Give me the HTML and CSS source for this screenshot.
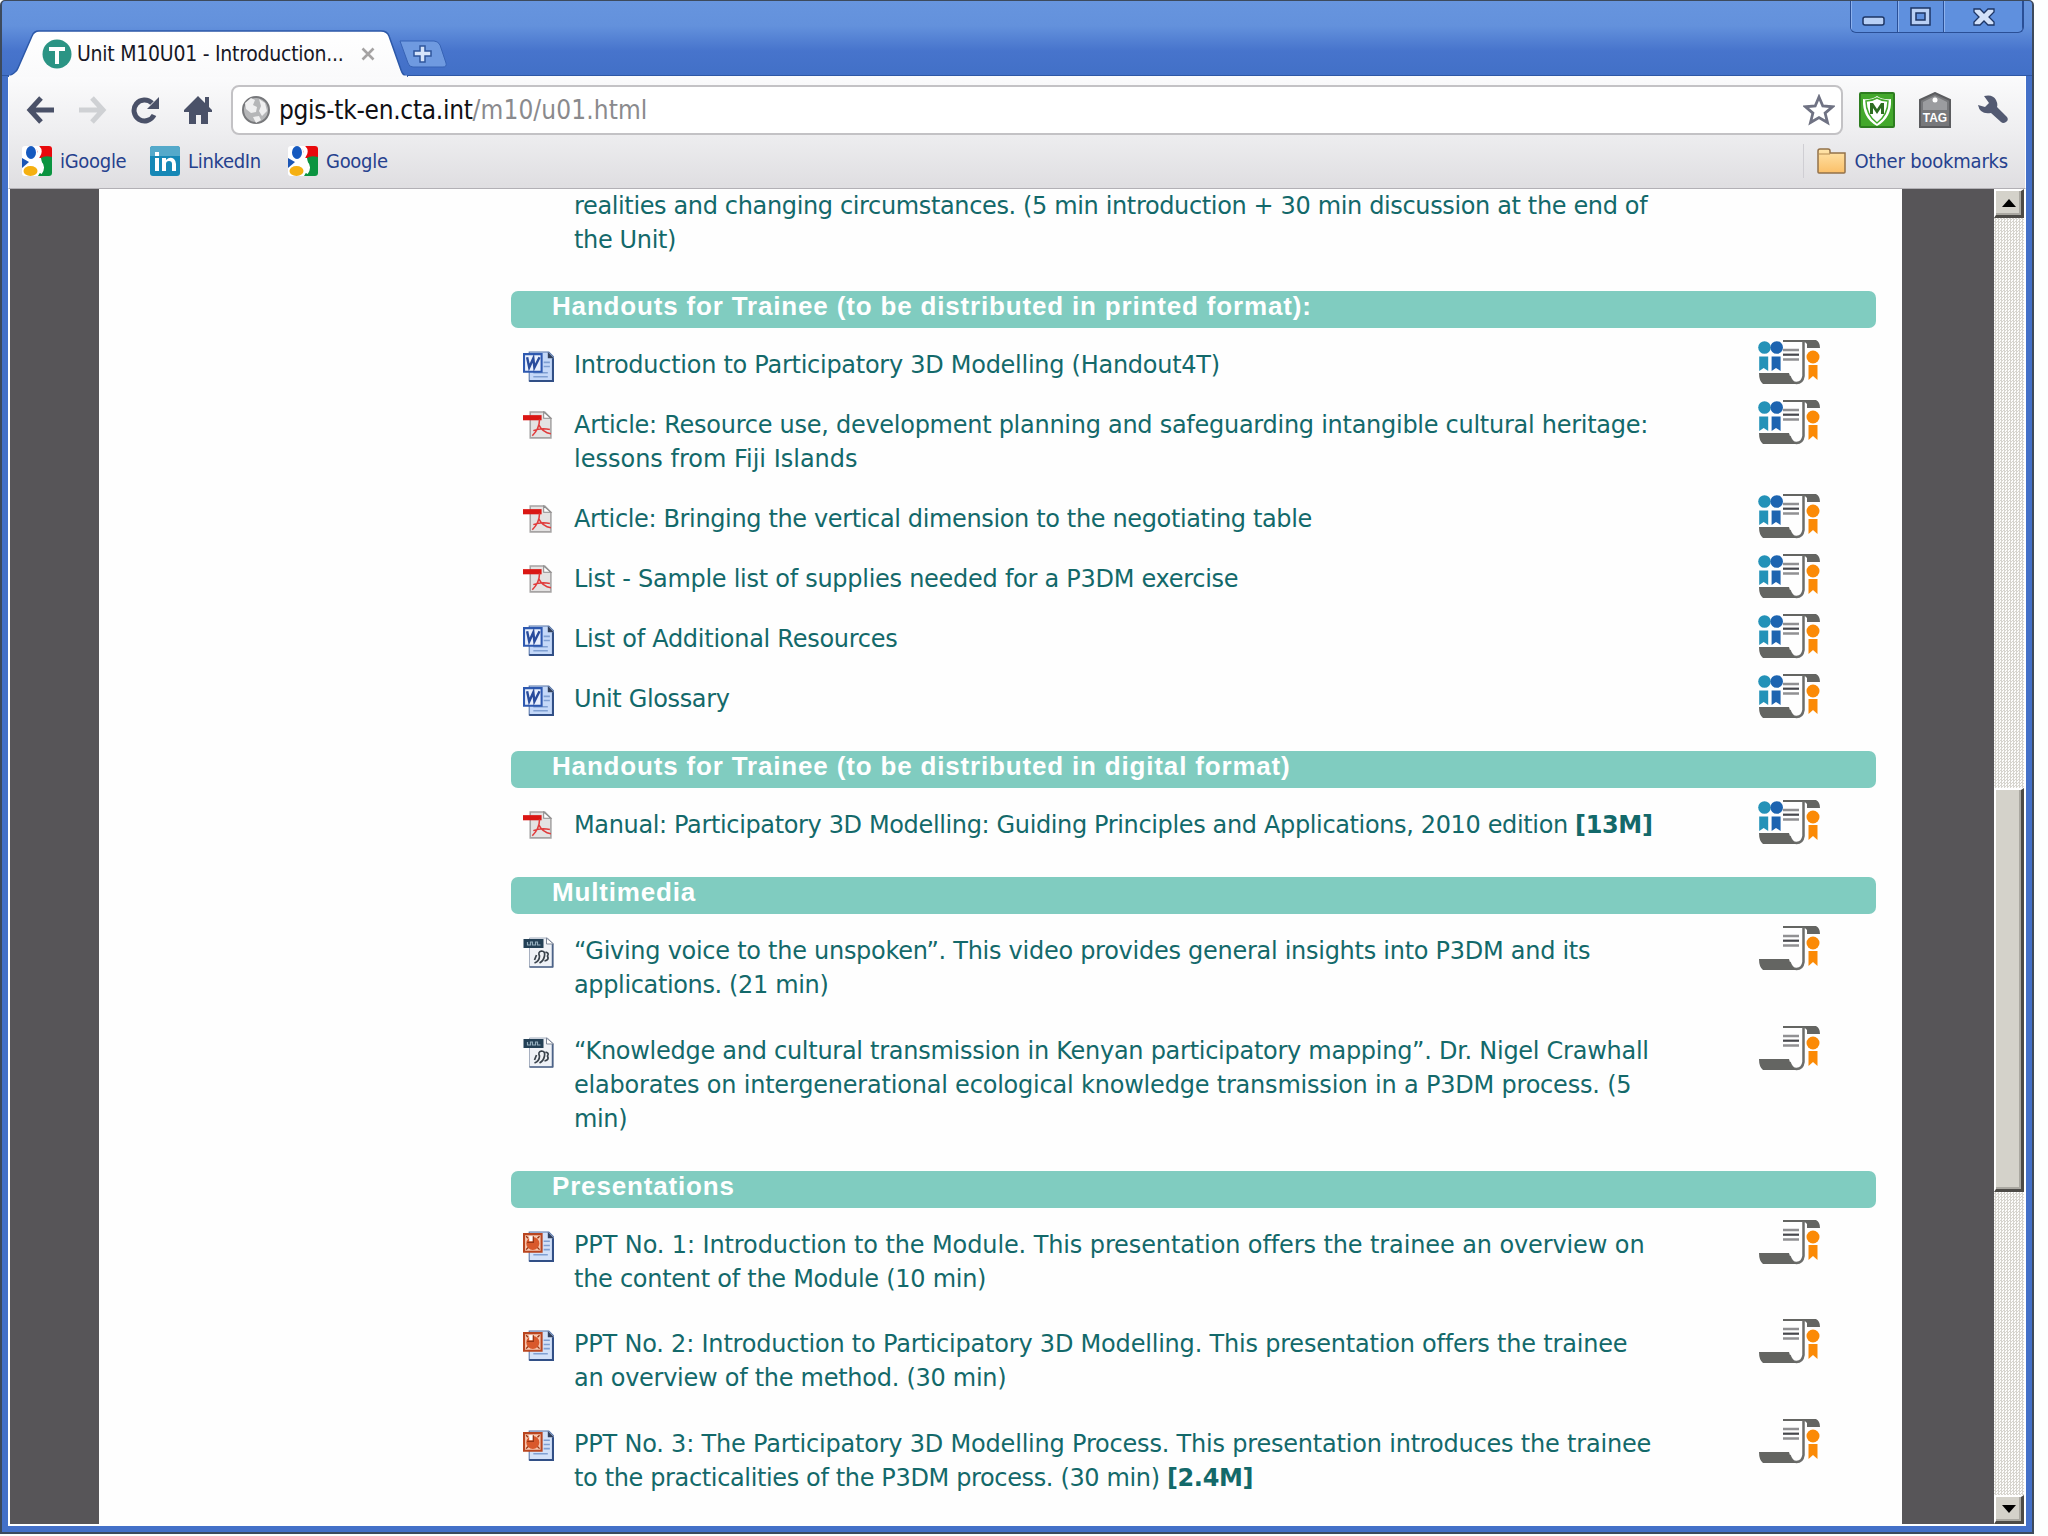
FILE: index.html
```html
<!DOCTYPE html>
<html lang="en">
<head>
    <meta charset="utf-8">
    <title>Unit M10U01 - Introduction to Participatory 3D Modelling</title>
    <link rel="stylesheet" href="styles.css">
</head>
<body>
    <!-- shared icons -->
    <svg class="sprite" width="0" height="0">
        <symbol id="scroll" viewBox="0 0 64 47">
            <path d="M25 1h33q4 2 4 8H49V5q-1-2-4-2H25z" fill="#646562"/>
            <path d="M45.500 2v35q-1 7-7 7-5 0-7-7" fill="none" stroke="#6c6d6b" stroke-width="2.500"/>
            <path d="M1 34h30q2 9 8 11H5q-4-3-4-11z" fill="#646562"/>
            <path d="M25 11h16M25 20.500h16" stroke="#909092" stroke-width="2.600"/>
            <path d="M25 15.700h16" stroke="#47484d" stroke-width="2.200"/>
            <circle cx="55" cy="18" r="6.500" fill="#fb8a06"/>
            <path d="M50.500 26h9v15l-4.500-4-4.500 4z" fill="#fb8a06"/>
        </symbol>
        <symbol id="people" viewBox="0 0 64 47">
            <circle cx="6.500" cy="8.500" r="6.300" fill="#2492b8"/>
            <path d="M1.200 17.500h9V32l-4.500-3-4.500 3z" fill="#2492b8"/>
            <circle cx="18.700" cy="8.500" r="6.300" fill="#1d64b0"/>
            <path d="M13.600 17.500h9V32L18 29l-4.400 3z" fill="#1d64b0"/>
        </symbol>
        <symbol id="word" viewBox="0 0 30 30">
            <path d="M6 1h19l5 5v23H6z" fill="#c4d8f8" stroke="#5674a8"/>
            <path d="M24 1v6h6z" fill="#33425e"/>
            <path d="M29 7v22H6" fill="none" stroke="#314f86" stroke-width="2"/>
            <path d="M10 21h14M10 25h14M20 11h6M20 15h6" stroke="#7f9fd2" stroke-width="1.500"/>
            <path d="M1 3h17v17H1z" fill="#eaf1fd" stroke="#2e59b0" stroke-width="2"/>
            <path d="M4 6l2 10 4-9 1 9 5-10" fill="none" stroke="#294c9c" stroke-width="2.300"/>
        </symbol>
        <symbol id="pdf" viewBox="0 0 30 30">
            <path d="M7 1h14l6 6v19H7z" fill="#e4e2e2" stroke="#a5a3a3" stroke-width="1.500"/>
            <path d="M20 1v6h7z" fill="#fff" stroke="#8d8b8b"/>
            <path d="M0 4h18v5H0z" fill="#da1714"/>
            <path d="M16 8q0 9-7 16M15 13q4 8 12 9M10 19q8-3 16-1" fill="none" stroke="#e03b3b" stroke-width="1.500"/>
        </symbol>
        <symbol id="video" viewBox="0 0 30 31">
            <path d="M6 1h18l6 6v23H6z" fill="#eff2f7" stroke="#a7b0c0"/>
            <path d="M29 7v23H6" fill="none" stroke="#4c6388" stroke-width="1.500"/>
            <path d="M23 1v6h7z" fill="#fff" stroke="#7b8596"/>
            <path d="M0 2h20v9H0z" fill="#223f55"/>
            <path d="M4 5v3h3V5h2v3h3V5h2v3h3" fill="none" stroke="#93adbd" stroke-width="1.200"/>
            <path d="M11 26q5-2 5-7-2-4 2-5 4 0 3 5t-5 7M22 15q4 1 2 4 2 4-3 5M13 18l-2 5" fill="none" stroke="#3a434c" stroke-width="1.700"/>
        </symbol>
        <symbol id="ppt" viewBox="0 0 30 30">
            <path d="M6 1h19l5 5v23H6z" fill="#d3e1f8" stroke="#5674a8"/>
            <path d="M24 1v6h6z" fill="#33425e"/>
            <path d="M29 7v22H6" fill="none" stroke="#314f86" stroke-width="2"/>
            <path d="M10 23h14M20 10h6M20 14h6M20 18h6" stroke="#7f9fd2" stroke-width="1.500"/>
            <path d="M1 3h17v17H1z" fill="#f7c9b2" stroke="#b9451f" stroke-width="2"/>
            <circle cx="9.500" cy="12" r="6.300" fill="#d9592b"/>
            <path d="M6 5h4v5H6z" fill="#fff"/>
            <path d="M10 5v6H4M3 5l2 2M16 5l-2 2M3 18l2-2M16 18l-2-2" fill="none" stroke="#9a3513" stroke-width="1.300"/>
        </symbol>
        <symbol id="google" viewBox="0 0 30 30">
            <rect width="30" height="30" rx="3" fill="#fff"/>
            <path d="M14 0h13q3 0 3 3v9H17z" fill="#e8090c"/>
            <path d="M19 12q4-3 11-1v16q0 3-3 3H16q6-8 3-18z" fill="#0b9440"/>
            <path d="M0 12l7 4-7 6z" fill="#1b55b5"/>
            <ellipse cx="9" cy="6.500" rx="5" ry="6.500" fill="#1559bf"/>
            <ellipse cx="8.500" cy="25" rx="7" ry="5" fill="#f5b011"/>
            <path d="M14 0q6 4 2 10-3 4 2 7 4 4 0 10" fill="none" stroke="#fff" stroke-width="4"/>
        </symbol>
        <linearGradient id="tabFill" x1="0" y1="0" x2="0" y2="1">
            <stop offset="0" stop-color="#fff"/>
            <stop offset="1" stop-color="#fafafb"/>
        </linearGradient>
        <linearGradient id="folderFill" x1="0" y1="0" x2="0" y2="1">
            <stop offset="0" stop-color="#ffe5ab"/>
            <stop offset="1" stop-color="#fbbf68"/>
        </linearGradient>
    </svg>

    <div class="window">
        <div class="titlebar">
            <div class="tab">
                <svg class="tab-shape" width="400" height="47" viewBox="0 0 400 47">
                    <path d="M0 47L6 43Q9 41 10 38L24 6Q26 1 31 1H373Q379 1 381 6L393 40Q395 46 400 47z" fill="url(#tabFill)" stroke="#2c58a8" stroke-width="1.500"/>
                    <path d="M1 47h398" stroke="#fafafb" stroke-width="3"/>
                </svg>
                <svg class="favicon" width="30" height="30" viewBox="0 0 30 30">
                    <circle cx="15" cy="15" r="14.500" fill="#2b9484"/>
                    <path d="M7 8h16v4h-6v13h-4V12H7z" fill="#fff"/>
                </svg>
                <span class="tab-title">Unit M10U01 - Introduction...</span>
                <svg class="tab-close" width="14" height="14" viewBox="0 0 14 14"><path d="M1.500 1.500l11 11M12.500 1.500l-11 11" stroke="#a5a3a3" stroke-width="2.600"/></svg>
            </div>
            <svg class="new-tab" width="48" height="28" viewBox="0 0 48 28">
                <path d="M1 1h34q4 0 6 4l6 18q1 4-3 4H14q-4 0-5-4z" fill="#6f9ae0" stroke="#3763b5"/>
                <path d="M21 6h5v5h6v5h-6v6h-5v-6h-6v-5h6z" fill="#d6e4fa" stroke="#2f569c" stroke-width="1.500"/>
            </svg>
            <div class="controls">
                <div class="control minimize">
                    <svg width="24" height="10" viewBox="0 0 24 10"><rect x="1" y="1" width="21" height="8" rx="2" fill="#b9d0f5" stroke="#1d3564" stroke-width="1.500"/></svg>
                </div>
                <div class="control maximize">
                    <svg width="24" height="20" viewBox="0 0 24 20"><path d="M2 1h19v17H2zM7 6v7h9V6z" fill="#b9d0f5" fill-rule="evenodd" stroke="#1d3564" stroke-width="1.500"/></svg>
                </div>
                <div class="control close">
                    <svg width="24" height="20" viewBox="0 0 24 20"><path d="M2 2h6l4 4 4-4h6v3l-5 5 5 5v3h-6l-4-4-4 4H2v-3l5-5-5-5z" fill="#d2e1f9" stroke="#1d3564" stroke-width="1.300"/></svg>
                </div>
            </div>
        </div>

        <div class="chrome">
            <div class="toolbar">
                <svg class="nav-icon" width="28" height="28" viewBox="0 0 28 28"><path d="M15 2L4 14l11 12M4 14h24" fill="none" stroke="#4a5168" stroke-width="5"/></svg>
                <svg class="nav-icon" width="28" height="28" viewBox="0 0 28 28"><path d="M13 2l11 12-11 12M24 14H0" fill="none" stroke="#cfd1d4" stroke-width="5"/></svg>
                <svg class="nav-icon" width="28" height="28" viewBox="0 0 28 28"><path d="M23 19A10.500 10.500 0 1 1 21 7" fill="none" stroke="#4a5168" stroke-width="5"/><path d="M28 1v12H16z" fill="#4a5168"/></svg>
                <svg class="nav-icon" width="28" height="28" viewBox="0 0 28 28"><path d="M14 0l7 7V1h4v10l3 3v2h-4v12h-7v-9h-5v9H5V16H0v-2z" fill="#4a5168"/></svg>
                <div class="address">
                    <svg width="30" height="30" viewBox="0 0 30 30">
                        <circle cx="15" cy="15" r="13" fill="#b5b6b8" stroke="#77787b" stroke-width="2"/>
                        <path d="M4 8l6-5 4 2-2 5 4 2-1 5-5 1-5-4zM18 4l6 4 2 8-5 5-3-5 2-5zM12 22l6-1 2 4-5 3z" fill="#efeff0"/>
                    </svg>
                    <span class="url"><b>pgis-tk-en.cta.int</b>/m10/u01.html</span>
                    <svg class="star" width="32" height="32" viewBox="0 0 32 32"><path d="M16 3l3.800 9 9.700.8-7.400 6.300 2.400 9.400L16 23.500l-8.500 5 2.400-9.400-7.400-6.300 9.700-.8z" fill="#fff" stroke="#6f7283" stroke-width="2.800"/></svg>
                </div>
                <svg class="shield" width="36" height="36" viewBox="0 0 36 36">
                    <rect x="1" y="1" width="34" height="34" rx="1" fill="#43a82c" stroke="#2d7d20" stroke-width="2"/>
                    <path d="M4 7q8 1 14-3 6 4 14 3 1 19-14 27Q3 26 4 7z" fill="#fff"/>
                    <path d="M7 9q6 0 11-3 5 3 11 3 0 14-11 22Q7 23 7 9z" fill="none" stroke="#43a82c" stroke-width="1.500"/>
                    <path d="M11 22V11h3l4 6 4-6h3v11h-3v-6l-4 6-4-6v6z" fill="#2e6d22"/>
                </svg>
                <svg class="tag" width="32" height="36" viewBox="0 0 32 36">
                    <path d="M1 8L16 1l15 7v27H1z" fill="#77787b" stroke="#5b5c5f" stroke-width="2"/>
                    <path d="M4 10l12-6 12 6v8H4z" fill="#9b9c9f"/>
                    <circle cx="16" cy="8" r="2.500" fill="#fff"/>
                    <text x="16" y="30" text-anchor="middle" class="tag-text">TAG</text>
                </svg>
                <svg class="wrench" width="32" height="30" viewBox="0 0 32 30"><path d="M7 1q9-2 12 4 2 4 1 7l10 10q2 3-1 5-3 2-5 0L14 18Q3 20 1 10l7 2 4-4z" fill="#535a72"/></svg>
            </div>
            <div class="bookmarks">
                <a class="bookmark igoogle"><svg width="30" height="30"><use href="#google"/></svg><span>iGoogle</span></a>
                <a class="bookmark linkedin">
                    <svg width="30" height="30" viewBox="0 0 30 30"><rect width="30" height="30" rx="3" fill="#1688b6"/><path d="M0 3q0-3 3-3h24q3 0 3 3v7H0z" fill="#54a9ca"/><path d="M5 12h4v13H5zM5 6h4v4H5zM12 12h4v2q4-4 8-1 2 2 2 5v7h-4v-7q0-3-3-3t-3 3v7h-4z" fill="#fff"/></svg>
                    <span>LinkedIn</span>
                </a>
                <a class="bookmark google"><svg width="30" height="30"><use href="#google"/></svg><span>Google</span></a>
                <a class="bookmark other">
                    <svg width="29" height="26" viewBox="0 0 29 26"><path d="M1 24V3q0-2 2-2h8q2 0 2 2v2h15v19q0 1-1 1H2q-1 0-1-1z" fill="url(#folderFill)" stroke="#93714a" stroke-width="1.500"/><path d="M2 6h11" stroke="#b78e55"/></svg>
                    <span>Other bookmarks</span>
                </a>
            </div>
        </div>

        <div class="viewport">
            <div class="page">
                <div class="content">
                    <p class="intro tight">realities and changing circumstances. (5 min introduction + 30 min discussion at the end of<br>the Unit)</p>

                    <h2>Handouts for Trainee (to be distributed in printed format):</h2>
                    <ul>
                        <li><svg class="file"><use href="#word"/></svg><p>Introduction to Participatory 3D Modelling (Handout4T)</p><svg class="badge"><use href="#people"/><use href="#scroll"/></svg></li>
                        <li><svg class="file"><use href="#pdf"/></svg><p>Article: Resource use, development planning and safeguarding intangible cultural heritage:<br><span class="normal">lessons from Fiji Islands</span></p><svg class="badge"><use href="#people"/><use href="#scroll"/></svg></li>
                        <li><svg class="file"><use href="#pdf"/></svg><p class="tight">Article: Bringing the vertical dimension to the negotiating table</p><svg class="badge"><use href="#people"/><use href="#scroll"/></svg></li>
                        <li><svg class="file"><use href="#pdf"/></svg><p>List - Sample list of supplies needed for a P3DM exercise</p><svg class="badge"><use href="#people"/><use href="#scroll"/></svg></li>
                        <li><svg class="file"><use href="#word"/></svg><p>List of Additional Resources</p><svg class="badge"><use href="#people"/><use href="#scroll"/></svg></li>
                        <li><svg class="file"><use href="#word"/></svg><p class="tight">Unit Glossary</p><svg class="badge"><use href="#people"/><use href="#scroll"/></svg></li>
                    </ul>

                    <h2>Handouts for Trainee (to be distributed in digital format)</h2>
                    <ul>
                        <li><svg class="file"><use href="#pdf"/></svg><p class="tight">Manual: Participatory 3D Modelling: Guiding Principles and Applications, 2010 edition <b>[13M]</b></p><svg class="badge"><use href="#people"/><use href="#scroll"/></svg></li>
                    </ul>

                    <h2>Multimedia</h2>
                    <ul class="loose">
                        <li><svg class="file"><use href="#video"/></svg><p>“Giving voice to the unspoken”. This video provides general insights into P3DM and its<br><span class="tight">applications. (21 min)</span></p><svg class="badge"><use href="#scroll"/></svg></li>
                        <li><svg class="file"><use href="#video"/></svg><p>“Knowledge and cultural transmission in Kenyan participatory mapping”. Dr. Nigel Crawhall<br><span class="wide">elaborates on intergenerational ecological knowledge transmission in a P3DM process. (5</span><br><span class="tight">min)</span></p><svg class="badge"><use href="#scroll"/></svg></li>
                    </ul>

                    <h2>Presentations</h2>
                    <ul class="loose">
                        <li><svg class="file"><use href="#ppt"/></svg><p><span class="wider">PPT No. 1: Introduction to the Module. This presentation offers the trainee an overview on</span><br>the content of the Module (10 min)</p><svg class="badge"><use href="#scroll"/></svg></li>
                        <li><svg class="file"><use href="#ppt"/></svg><p><span class="wide">PPT No. 2: Introduction to Participatory 3D Modelling. This presentation offers the trainee</span><br>an overview of the method. (30 min)</p><svg class="badge"><use href="#scroll"/></svg></li>
                        <li><svg class="file"><use href="#ppt"/></svg><p><span class="wide">PPT No. 3: The Participatory 3D Modelling Process. This presentation introduces the trainee</span><br><span class="tight">to the practicalities of the P3DM process. (30 min) <b>[2.4M]</b></span></p><svg class="badge"><use href="#scroll"/></svg></li>
                    </ul>
                </div>
            </div>
            <div class="scrollbar">
                <div class="scroll-button"><svg width="14" height="8" viewBox="0 0 14 8"><path d="M0 8l7-8 7 8z"/></svg></div>
                <div class="track-before"></div>
                <div class="thumb"></div>
                <div class="track-after"></div>
                <div class="scroll-button"><svg width="14" height="8" viewBox="0 0 14 8"><path d="M0 0l7 8 7-8z"/></svg></div>
            </div>
        </div>
    </div>
</body>
</html>
```
FILE: styles.css
```css
* {
    box-sizing: border-box;
}

body {
    margin: 0;
    background: #fdfffe;
    overflow: hidden;
}

svg {
    display: block;
    flex: none;
}

.sprite {
    position: absolute;
}

.window {
    display: flex;
    flex-direction: column;
    width: 2034px;
    height: 1534px;
    background: #4370c8;
    border: 2px solid #3d4a5c;
    border-top-width: 1px;
    border-radius: 5px 5px 0 0;
    padding: 0 6px 6px;
    font-family: "DejaVu Sans Condensed", "DejaVu Sans", sans-serif;
    font-stretch: condensed;
}

.titlebar {
    display: flex;
    flex: none;
    height: 75px;
    margin: 0 -6px;
    padding: 0 8px 0 6px;
    border-radius: 4px 4px 0 0;
    background: linear-gradient(#6795de 0, #6391dc 25px, #4774cc 50px, #4270c7);
    border-bottom: 1px solid #2e57a5;
}

.tab {
    position: relative;
    display: flex;
    align-items: center;
    width: 400px;
    height: 46px;
    margin-top: 29px;
    padding-left: 34px;
}

.tab-shape {
    position: absolute;
    left: 0;
    top: 0;
}

.favicon,
.tab-title,
.tab-close {
    position: relative;
}

.favicon {
    margin-top: 2px;
}

.tab-title {
    margin-left: 5px;
    padding-top: 2px;
    width: 269px;
    font-size: 21px;
    letter-spacing: -0.25px;
    color: #171725;
    white-space: nowrap;
}

.tab-close {
    margin: 2px 0 0 15px;
}

.new-tab {
    margin: 39px 0 0 -9px;
}

.controls {
    display: flex;
    margin-left: auto;
    width: 174px;
    height: 32px;
    border: 1px solid #2a4f96;
    border-top: 0;
    border-radius: 0 0 6px 6px;
    background: #5f90de;
    overflow: hidden;
}

.control {
    display: flex;
    justify-content: center;
    padding-top: 6px;
    width: 47px;
    box-shadow: inset 1px 0 #8db2ee, inset -1px 0 #2a4f96;
}

.minimize {
    padding-top: 15px;
}

.close {
    width: 79px;
}

.chrome {
    flex: none;
    height: 113px;
    background: linear-gradient(#fbfbfc, #eeeef0 50%, #dfdee1);
    border-left: 1px solid #fff;
    border-right: 1px solid #fff;
    border-bottom: 1px solid #b2b0b5;
}

.toolbar {
    display: flex;
    align-items: center;
    height: 67px;
    padding: 0 16px 0 17px;
}

.nav-icon {
    margin-right: 24.500px;
}

.address {
    display: flex;
    align-items: center;
    width: 1612px;
    height: 50px;
    margin-left: -5px;
    padding: 0 6px 0 8px;
    border: 2px solid #c3c2c5;
    border-radius: 8px;
    background: #fff;
}

.url {
    margin-left: 8px;
    font-size: 26px;
    letter-spacing: 0.100px;
    color: #8a8a8d;
}

.url b {
    font-weight: normal;
    letter-spacing: -0.300px;
    color: #101014;
}

.star {
    margin-left: auto;
}

.shield {
    margin-left: 16px;
}

.tag {
    margin-left: 24px;
}

.tag-text {
    font: bold 12px "Liberation Sans", Arial, sans-serif;
    fill: #fff;
}

.wrench {
    margin-left: 26px;
}

.bookmarks {
    display: flex;
    align-items: center;
    height: 45px;
    padding: 0 17px 0 13px;
    margin-top: -5px;
    font-size: 20px;
    color: #26418e;
}

.bookmark {
    display: flex;
    align-items: center;
    white-space: nowrap;
}

.bookmark span {
    margin-left: 8px;
    letter-spacing: -0.300px;
}

.igoogle {
    width: 128px;
}

.linkedin {
    width: 138px;
}

.other {
    margin-left: auto;
    padding-left: 13px;
    border-left: 1px solid #cfced3;
    height: 34px;
}

.other span {
    margin-left: 9px;
    letter-spacing: -0.200px;
}

.viewport {
    display: flex;
    flex: none;
    height: 1337px;
    border: 2px solid #fff;
    border-top: 0;
    background: #575558;
    overflow: hidden;
}

.page {
    width: 1803px;
    height: 100%;
    margin-left: 89px;
    background: #fefefe;
    overflow: hidden;
}

.content {
    width: 1365px;
    margin-left: 412px;
    font-family: "DejaVu Sans", Verdana, sans-serif;
    font-stretch: normal;
    font-size: 24px;
    line-height: 34px;
    letter-spacing: -0.270px;
    color: #13696a;
    white-space: nowrap;
}

.normal {
    letter-spacing: 0;
}

.tight {
    letter-spacing: -0.360px;
}

.wide {
    letter-spacing: -0.200px;
}

.wider {
    letter-spacing: -0.110px;
}

p {
    margin: 0;
}

.intro {
    height: 67px;
    padding-left: 63px;
}

h2 {
    height: 37px;
    margin: 35px 0 20px;
    padding-left: 41px;
    border-radius: 7px;
    background: #80ccc0;
    font: bold 26px/31px "Liberation Sans", Arial, sans-serif;
    letter-spacing: 0.830px;
    color: #fff;
}

ul {
    display: grid;
    gap: 26px;
    list-style: none;
    margin: 0;
    padding: 0;
}

.loose {
    gap: 31.700px;
}

li {
    display: flex;
    align-items: flex-start;
    padding-left: 12px;
}

.file {
    width: 31px;
    height: 31px;
    margin-top: 3px;
}

li p {
    margin-left: 20px;
}

.badge {
    width: 64px;
    height: 47px;
    margin: -9px 54px -4px auto;
}

.scrollbar {
    display: flex;
    flex-direction: column;
    width: 30px;
    margin-left: auto;
    background: repeating-conic-gradient(#d6d4ce 0 25%, #fdfdfc 0 50%) 0 0 / 3px 3px;
}

.scroll-button,
.thumb {
    background: #d4d2ca;
    border: 2px solid #fff;
    border-right: 3px solid #4d4b47;
    border-bottom: 3px solid #4d4b47;
    box-shadow: inset -2px -2px #aaa8a1;
}

.scroll-button {
    display: flex;
    align-items: center;
    justify-content: center;
    height: 29px;
}

.track-before {
    height: 570px;
}

.thumb {
    height: 404px;
}

.track-after {
    flex: 1;
}
```
